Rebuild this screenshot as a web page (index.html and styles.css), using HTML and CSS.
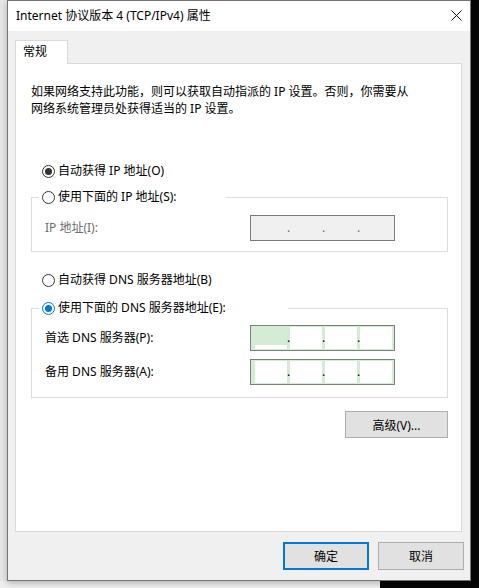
FILE: index.html
```html
<!DOCTYPE html>
<html lang="zh-CN">
<head>
  <meta charset="UTF-8">
  <meta name="viewport" content="width=device-width, initial-scale=1.0">
  <title>Internet 协议版本 4 (TCP/IPv4) 属性</title>
  <link rel="stylesheet" href="styles.css">
</head>
<body>
  <div class="dialog">
    <div class="titlebar">
      <span class="title">Internet 协议版本 4 (TCP/IPv4) 属性</span>
      <svg class="close" width="11" height="11" viewBox="0 0 11 11">
        <path d="M0.5 0.5L10.5 10.5M10.5 0.5L0.5 10.5" stroke="#111" stroke-width="1" fill="none"/>
      </svg>
    </div>

    <div class="content">
      <div class="tabs">
        <div class="tab">常规</div>
      </div>

      <div class="panel">
        <p class="intro">如果网络支持此功能，则可以获取自动指派的 IP 设置。否则，你需要从<br>网络系统管理员处获得适当的 IP 设置。</p>

        <div class="radio first"><span class="dot checked"></span>自动获得 IP 地址(O)</div>

        <fieldset class="group ip-group">
          <legend class="legend ip-legend">
            <div class="radio"><span class="dot"></span>使用下面的 IP 地址(S):</div>
          </legend>
          <div class="row">
            <span class="label disabled">IP 地址(I):</span>
            <div class="ip-box off">
              <span class="cell"></span><span class="sep">.</span>
              <span class="cell"></span><span class="sep">.</span>
              <span class="cell"></span><span class="sep">.</span>
              <span class="cell"></span>
            </div>
          </div>
        </fieldset>

        <div class="radio dns-auto"><span class="dot"></span>自动获得 DNS 服务器地址(B)</div>

        <fieldset class="group dns-group">
          <legend class="legend dns-legend">
            <div class="radio"><span class="dot checked active"></span>使用下面的 DNS 服务器地址(E):</div>
          </legend>
          <div class="row">
            <span class="label">首选 DNS 服务器(P):</span>
            <div class="ip-box on">
              <span class="cell focus"></span><span class="sep">.</span>
              <span class="cell"></span><span class="sep">.</span>
              <span class="cell"></span><span class="sep">.</span>
              <span class="cell"></span>
            </div>
          </div>
          <div class="row">
            <span class="label">备用 DNS 服务器(A):</span>
            <div class="ip-box on">
              <span class="cell"></span><span class="sep">.</span>
              <span class="cell"></span><span class="sep">.</span>
              <span class="cell"></span><span class="sep">.</span>
              <span class="cell"></span>
            </div>
          </div>
        </fieldset>

        <div class="advanced">
          <button class="btn wide">高级(V)...</button>
        </div>
      </div>

      <div class="footer">
        <button class="btn primary">确定</button>
        <button class="btn">取消</button>
      </div>
    </div>
  </div>
</body>
</html>
```

FILE: styles.css
```css
/* Desktop behind the dialog */
body {
  margin: 0;
  width: 479px;
  height: 588px;
  overflow: hidden;
  font-family: "Noto Sans", "Noto Sans CJK SC", sans-serif;
  font-size: 12px;
  color: #000;
  background:
    linear-gradient(#eeeeee, #eeeeee) left bottom / 380px 7px no-repeat,
    linear-gradient(#e6e6e6, #e6e6e6) left top / 7px 100% no-repeat,
    #060606;
}

/* Dialog window */
.dialog {
  box-sizing: border-box;
  width: 464px;
  height: 581px;
  margin-left: 7px;
  border: 1px solid #747474;
  background-color: #f0f0f0;
  box-shadow: 0 2px 6px rgba(0, 0, 0, 0.25);
}

.titlebar {
  display: flex;
  align-items: center;
  justify-content: space-between;
  height: 30px;
  padding: 0 8px 0 8px;
  background-color: #fff;
}

.title {
  line-height: 30px;
}

.close {
  margin-top: -2px;
}

.content {
  padding: 9px 6px 0 7px;
}

/* Tab strip */
.tabs {
  display: flex;
}

.tab {
  position: relative;
  width: 53px;
  height: 24px;
  box-sizing: border-box;
  margin-bottom: -1px;
  padding-left: 7px;
  line-height: 22px;
  border: 1px solid #d9d9d9;
  border-bottom: none;
  background-color: #fff;
}

.panel {
  box-sizing: border-box;
  width: 447px;
  height: 469px;
  padding-left: 15px;
  border: 1px solid #d9d9d9;
  background-color: #fff;
}

.intro {
  margin: 19px 0 0;
  line-height: 17px;
}

/* Radio buttons */
.radio {
  display: flex;
  align-items: center;
  gap: 3px;
  height: 18px;
  line-height: 18px;
  white-space: nowrap;
}

.radio.first {
  margin: 45px 0 0 11px;
}

.radio.dns-auto {
  margin: 19px 0 0 11px;
}

.dot {
  display: flex;
  align-items: center;
  justify-content: center;
  box-sizing: border-box;
  width: 13px;
  height: 13px;
  border: 1px solid #333;
  border-radius: 50%;
  background-color: #fff;
}

.dot.checked::after {
  content: "";
  width: 7px;
  height: 7px;
  border-radius: 50%;
  background-color: #333;
}

.dot.active {
  border-color: #0078d7;
}

.dot.active::after {
  background-color: #0078d7;
}

/* Group boxes */
.group {
  box-sizing: border-box;
  width: 417px;
  min-width: 0;
  margin: 0;
  border: 1px solid #dcdcdc;
  display: flex;
  flex-direction: column;
  gap: 8px;
}

.ip-group {
  margin-top: 8px;
  padding: 9px 0 10px;
}

.dns-group {
  margin-top: 10px;
  padding: 8px 0 12px;
}

.legend {
  box-sizing: border-box;
  margin-left: 7px;
  padding: 0 0 0 3px;
}

.ip-legend {
  width: 187px;
}

.dns-legend {
  width: 249px;
}

.row {
  display: flex;
  align-items: center;
  padding-left: 13px;
}

.label {
  width: 205px;
  line-height: 18px;
}

.label.disabled {
  color: #6d6d6d;
}

/* IP address fields */
.ip-box {
  display: flex;
  box-sizing: border-box;
  width: 145px;
  height: 26px;
  padding: 1px 2px 1px 4px;
  border: 1px solid #7a7a7a;
}

.ip-box.off {
  background-color: #f0f0f0;
  color: #6d6d6d;
}

.ip-box.on {
  background-color: #d4ebd4;
  border-color: #768476;
}

.cell {
  width: 32px;
  height: 22px;
}

.ip-box.on .cell {
  background-color: #fff;
}

.ip-box.on .cell.focus {
  background: linear-gradient(#d4ebd4 0 18px, #fff 18px);
}

.sep {
  width: 3px;
  line-height: 22px;
  text-align: center;
  overflow: hidden;
}

/* Buttons */
.advanced {
  display: flex;
  justify-content: flex-end;
  width: 417px;
  margin-top: 13px;
}

.btn {
  box-sizing: border-box;
  width: 86px;
  height: 28px;
  padding: 0;
  font-family: inherit;
  font-size: 12px;
  color: #000;
  background-color: #e1e1e1;
  border: 1px solid #adadad;
}

.btn.wide {
  width: 103px;
  height: 27px;
}

.btn.primary {
  border: 2px solid #0078d7;
}

.footer {
  display: flex;
  justify-content: flex-end;
  gap: 9px;
  margin-top: 10px;
}
```
